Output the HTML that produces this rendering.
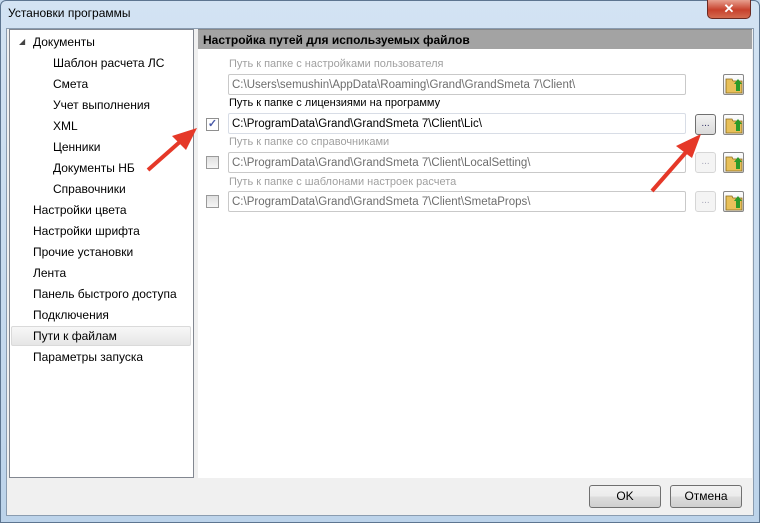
<!DOCTYPE html>
<html><head><meta charset="utf-8"><style>
*{margin:0;padding:0;box-sizing:border-box}
body{width:760px;height:523px;overflow:hidden;font-family:"Liberation Sans",sans-serif;font-size:12px;position:relative;background:#c4d9ee}
.frame{position:absolute;left:0;top:0;width:760px;height:523px;background:linear-gradient(#d3e3f3,#bcd3ea);border:1px solid #5d7590;border-radius:6px 6px 0 0}
.title{position:absolute;left:8px;top:6px;font-size:12px;color:#000}
.close{position:absolute;left:707px;top:0;width:44px;height:19px;border:1px solid #6b2a22;border-top:none;border-radius:0 0 5px 5px;background:linear-gradient(#e8a08f,#c7412c 55%,#d36a4f);color:#fff;text-align:center;font-weight:bold;font-size:13px;line-height:17px}
.client{position:absolute;left:6px;top:28px;width:748px;height:488px;background:#f0f0f0;border:1px solid #8a9cb0}
.left{position:absolute;left:9px;top:29px;width:185px;height:449px;background:#fff;border:1px solid #828790}
.item{position:absolute;font-size:12px;color:#000;white-space:nowrap}
.sel{position:absolute;left:11px;top:326px;width:180px;height:20px;border:1px solid #dadada;border-radius:2px;background:linear-gradient(#f7f7f7,#e6e6e6)}
.right{position:absolute;left:198px;top:29px;width:554px;height:449px;background:#fff}
.hdr{position:absolute;left:198px;top:29px;width:554px;height:20px;background:#a3a3a3;font-weight:bold;font-size:12px;padding:3px 0 0 5px;border-top:1px solid #888}
.lbl{position:absolute;left:229px;font-size:11px;color:#a0a0a0;white-space:nowrap}
.inp{position:absolute;left:228px;width:458px;height:21px;border:1px solid #c9c9c9;border-radius:2px;font-size:11.5px;padding:4px 0 0 3px;color:#6d6d6d;white-space:nowrap;background:#fff}
.cb{position:absolute;left:206px;width:13px;height:13px;border:1px solid #9a9a9a;background:linear-gradient(#e0e0e0,#f6f6f6)}
.dots{position:absolute;left:695px;width:21px;height:21px;border:1px solid #d6d6d6;border-radius:3px;font-size:10px;text-align:center;color:#aab;background:#f4f4f4;line-height:17px}
.fold{position:absolute;left:723px;width:21px;height:21px;border:1px solid #888;border-radius:2px;background:linear-gradient(#fdfdfd,#e3e3e3)}
.btn{position:absolute;top:485px;width:72px;height:23px;border:1px solid #707070;border-radius:3px;background:linear-gradient(#f2f2f2,#ebebeb 50%,#dddddd 51%,#cfcfcf);text-align:center;line-height:21px;font-size:12px}
</style></head><body>
<div class="frame"></div>
<div class="title">Установки программы</div>
<div class="close">✕</div>
<div class="client"></div>
<div class="left"></div>
<div class="sel"></div>
<div class="item" style="left:19px;top:37px;font-size:8px;color:#444">◢</div>
<div class="item" style="left:33px;top:35px">Документы</div>
<div class="item" style="left:53px;top:56px">Шаблон расчета ЛС</div>
<div class="item" style="left:53px;top:77px">Смета</div>
<div class="item" style="left:53px;top:98px">Учет выполнения</div>
<div class="item" style="left:53px;top:119px">XML</div>
<div class="item" style="left:53px;top:140px">Ценники</div>
<div class="item" style="left:53px;top:161px">Документы НБ</div>
<div class="item" style="left:53px;top:182px">Справочники</div>
<div class="item" style="left:33px;top:203px">Настройки цвета</div>
<div class="item" style="left:33px;top:224px">Настройки шрифта</div>
<div class="item" style="left:33px;top:245px">Прочие установки</div>
<div class="item" style="left:33px;top:266px">Лента</div>
<div class="item" style="left:33px;top:287px">Панель быстрого доступа</div>
<div class="item" style="left:33px;top:308px">Подключения</div>
<div class="item" style="left:33px;top:329px">Пути к файлам</div>
<div class="item" style="left:33px;top:350px">Параметры запуска</div>
<div class="right"></div>
<div class="hdr">Настройка путей для используемых файлов</div>

<div class="lbl" style="top:58px">Путь к папке с настройками пользователя</div>
<div class="inp" style="top:74px">C:\Users\semushin\AppData\Roaming\Grand\GrandSmeta 7\Client\</div>
<div class="fold" style="top:74px"></div>

<div class="lbl" style="top:97px;color:#000">Путь к папке с лицензиями на программу</div>
<div class="cb" style="top:118px;border-color:#8f8f8f;background:#fff;font-size:11px;line-height:10px;color:#4a5aa8;text-align:center;font-weight:bold">✓</div>
<div class="inp" style="top:113px;color:#000;border-color:#d8dde6">C:\ProgramData\Grand\GrandSmeta 7\Client\Lic\</div>
<div class="dots" style="top:114px;border-color:#707070;color:#336;background:linear-gradient(#f2f2f2,#dadada)">...</div>
<div class="fold" style="top:114px"></div>

<div class="lbl" style="top:136px">Путь к папке со справочниками</div>
<div class="cb" style="top:156px"></div>
<div class="inp" style="top:152px">C:\ProgramData\Grand\GrandSmeta 7\Client\LocalSetting\</div>
<div class="dots" style="top:152px">...</div>
<div class="fold" style="top:152px"></div>

<div class="lbl" style="top:176px">Путь к папке с шаблонами настроек расчета</div>
<div class="cb" style="top:195px"></div>
<div class="inp" style="top:191px">C:\ProgramData\Grand\GrandSmeta 7\Client\SmetaProps\</div>
<div class="dots" style="top:191px">...</div>
<div class="fold" style="top:191px"></div>

<svg style="position:absolute;left:0;top:0" width="760" height="523">
<g>
<path d="M726 79h6l1 2h9v12h-16z" fill="#e8c05a" stroke="#8a6a1a" stroke-width="0.8"/>
<path d="M736 91l0-7h-2l4-5 4 5h-2v7z" fill="#2a9a2a"/>
<path d="M726 119h6l1 2h9v12h-16z" fill="#e8c05a" stroke="#8a6a1a" stroke-width="0.8"/>
<path d="M736 131l0-7h-2l4-5 4 5h-2v7z" fill="#2a9a2a"/>
<path d="M726 157h6l1 2h9v12h-16z" fill="#e8c05a" stroke="#8a6a1a" stroke-width="0.8"/>
<path d="M736 169l0-7h-2l4-5 4 5h-2v7z" fill="#2a9a2a"/>
<path d="M726 196h6l1 2h9v12h-16z" fill="#e8c05a" stroke="#8a6a1a" stroke-width="0.8"/>
<path d="M736 208l0-7h-2l4-5 4 5h-2v7z" fill="#2a9a2a"/>
</g>
<line x1="148" y1="170" x2="182" y2="140" stroke="#e53828" stroke-width="4"/>
<path d="M197 128L172 136L186 150Z" fill="#e53828"/>
<line x1="652" y1="191" x2="688" y2="150" stroke="#e53828" stroke-width="4"/>
<path d="M701 134L676 146L692 158Z" fill="#e53828"/>
</svg>

<div class="btn" style="left:589px">OK</div>
<div class="btn" style="left:670px">Отмена</div>
</body></html>
